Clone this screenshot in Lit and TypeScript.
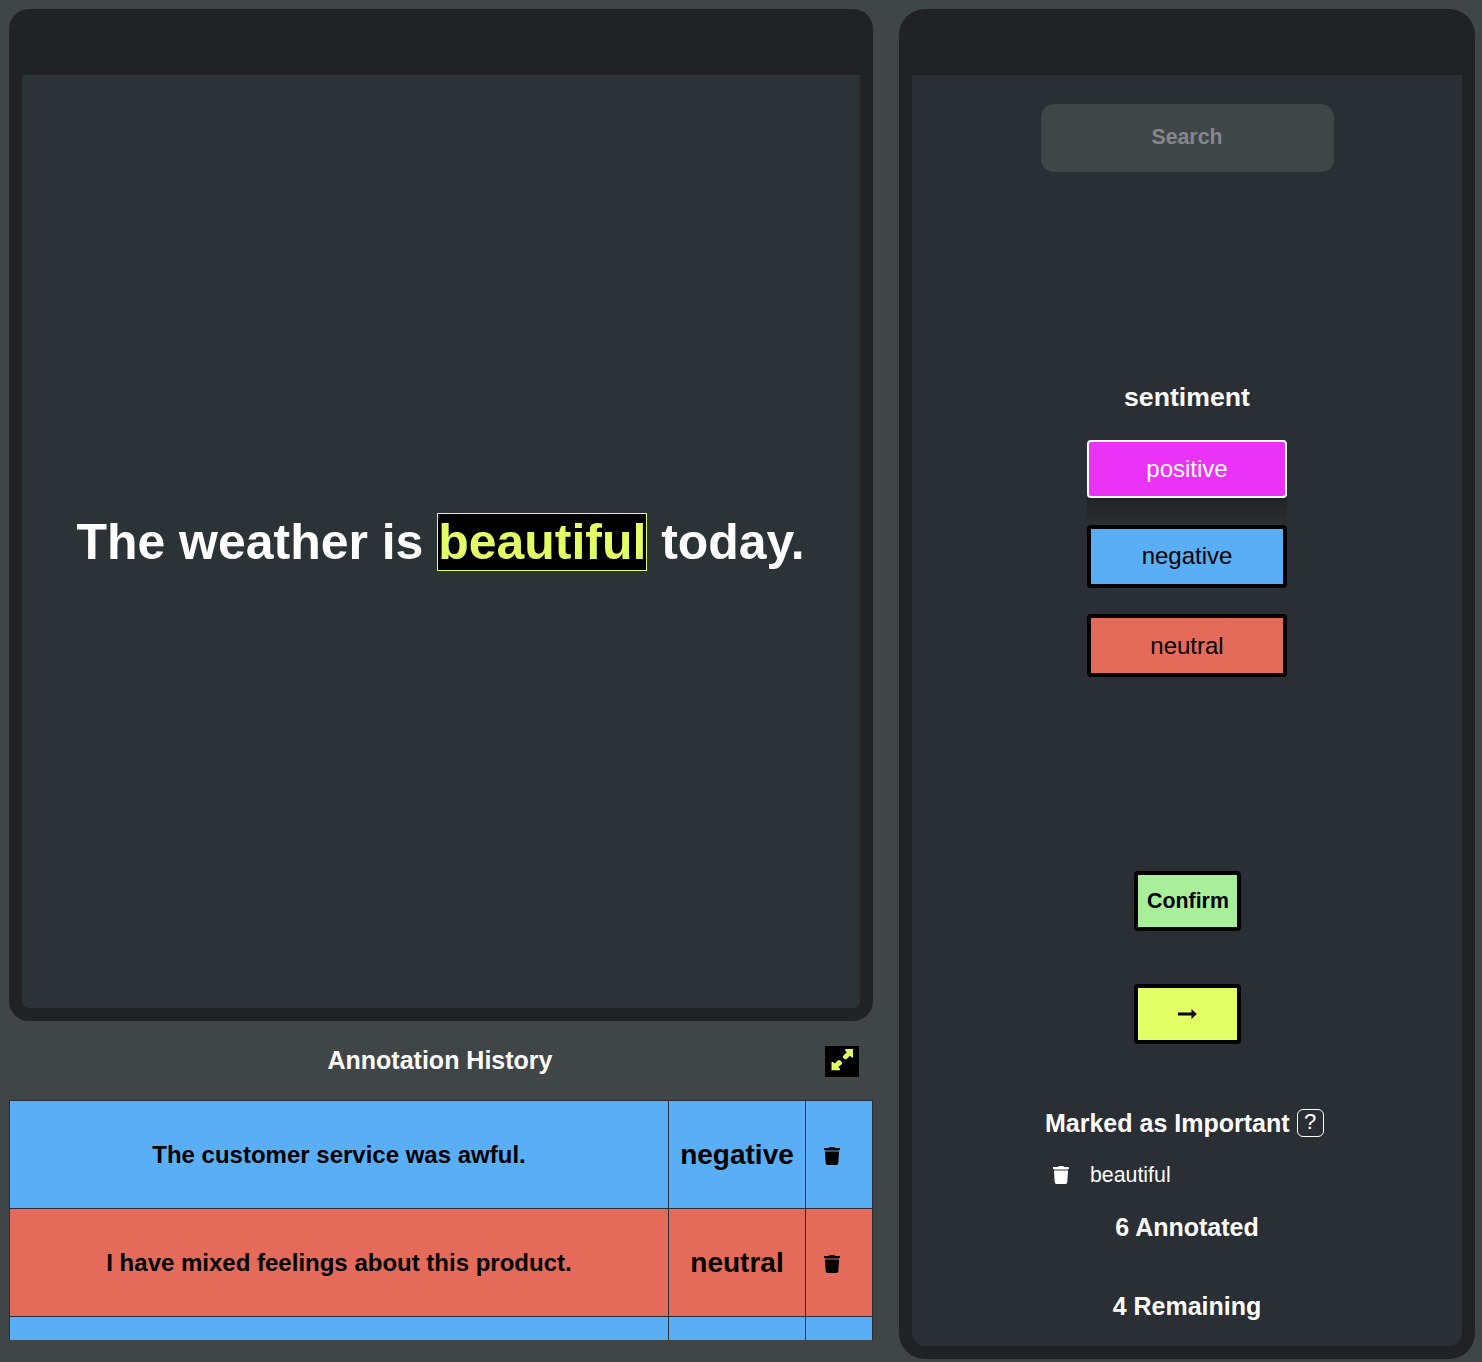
import { LitElement, html, css, svg } from "lit";
import { customElement, property } from "lit/decorators.js";

@customElement("trash-icon")
class TrashIcon extends LitElement {
  static styles = css`
    :host { display: block; width: 16px; height: 18px; }
    .icon { display: block; fill: currentColor; }
    .rim { opacity: 0.5; }
  `;
  render() {
    return html`<svg class="icon" width="16" height="18" viewBox="0 0 16 18">
      <path d="M0 1H4.500Q5.500 0 6.500 0H9.500Q10.500 0 11.500 1H16V3H0Z" />
      <path class="rim" d="M1 3H15V5H1Z" />
      <path d="M1 5H15L14.300 16Q14.200 18 12.500 18H3.500Q1.800 18 1.700 16Z" />
    </svg>`;
  }
}

interface HistoryRow { text: string; label: string; kind: string; }

@customElement("annotation-history")
class AnnotationHistory extends LitElement {
  @property({ attribute: false }) rows: HistoryRow[] = [];
  static styles = css`
    :host { display: block; }
    .head { display: grid; grid-template-columns: 1fr auto 1fr; align-items: center; height: 31px; margin-top: 25px; padding-right: 14px; padding-left: 12px; }
    .title { grid-column: 2; margin: 0; padding-bottom: 2px; font-size: 25px; line-height: 29px; font-weight: 700; color: #fff; }
    .expand { grid-column: 3; justify-self: end; width: 34px; height: 31px; background: #000; display: flex; }
    .arrows { fill: #e4ff66; }
    .table { margin-top: 23px; height: 240px; overflow: hidden; }
    .row { display: grid; grid-template-columns: 659px 137px 67px; height: 107px; border-bottom: 1px solid #2a2e36; border-left: 1px solid #2a2e36; }
    .row:first-child { border-top: 1px solid #2a2e36; }
    .cell { display: flex; align-items: center; justify-content: center; box-sizing: border-box; border-right: 1px solid #2a2e36; font-weight: 700; }
    .text { font-size: 24px; }
    .label { font-size: 28px; }
    .remove { justify-content: flex-start; padding: 2px 0 0 18px; }
    .negative { background: #59aef6; }
    .neutral { background: #e46a5a; }
  `;
  render() {
    return html`
      <div class="head">
        <h2 class="title">Annotation History</h2>
        <div class="expand">
          <svg class="arrows" width="34" height="31" viewBox="0 0 34 31">
            ${svg`<path d="M20.500 3H28V11.500H26.700L25 9.800L21.300 13.300H19.800L18 11.800V10L21.800 6.300L20 4.500Z" />
            <path d="M6.500 16H8L9.800 17.500L13 14.200H15L17 16.300V18L13.300 21L15 22.800V24.300H6.500Z" />`}
          </svg>
        </div>
      </div>
      <div class="table">
        ${this.rows.map((r) => html`<div class="row ${r.kind}">
          <div class="cell text">${r.text}</div>
          <div class="cell label">${r.label}</div>
          <div class="cell remove"><trash-icon></trash-icon></div>
        </div>`)}
      </div>`;
  }
}

@customElement("app-root")
class AppRoot extends LitElement {
  static styles = css`
    :host { display: block; width: 1482px; height: 1362px; overflow: hidden; background: #404548; color: #000; font-family: "Liberation Sans", Arial, sans-serif; }
    .page { display: flex; gap: 26px; box-sizing: border-box; height: 1362px; padding: 9px 7px 3px 9px; }
    .main { width: 864px; }
    .frame { box-sizing: border-box; background: #212226; padding: 66px 13px 13px; }
    .doc { height: 1012px; border-radius: 20px; }
    .canvas { height: 933px; display: flex; align-items: center; justify-content: center; background: #2c3336; border-radius: 0 0 7px 7px; }
    .sentence { margin: 0; font-size: 49.950px; line-height: 58px; font-weight: 700; color: #fff; white-space: nowrap; padding-right: 1px; }
    .marked { color: #e4ff66; background: #000; border: 1px solid #e4ff66; }
    .side { width: 576px; height: 1350px; border-radius: 26px; }
    .panel { height: 1271px; box-sizing: border-box; padding-top: 29px; display: flex; flex-direction: column; align-items: center; background: #2a2e35; border-radius: 0 0 13px 13px; color: #fff; }
    .search { box-sizing: border-box; width: 293px; height: 68px; padding: 0 0 1px; border: 0; border-radius: 13px; background: #404548; text-align: center; font: 700 21.33px "Liberation Sans", Arial, sans-serif; color: #fff; }
    .search::placeholder { color: #84888b; opacity: 1; }
    .group { margin: 210px 0 0; font-size: 26.67px; line-height: 30px; font-weight: 700; }
    .choices { display: flex; flex-direction: column; width: 200px; margin-top: 28px; }
    .choice { box-sizing: border-box; display: flex; align-items: center; justify-content: center; border: 4px solid #000; border-radius: 4px; height: 63px; font-size: 24px; color: #000; }
    .positive { height: 58px; border: 2px solid #fff; background: #ea33f7; color: #fff; }
    .shade { height: 27px; background: linear-gradient(#1f2326, #25292c 45%, #2a2e31); }
    .negative { background: #59aef6; padding-bottom: 2px; }
    .neutral { margin-top: 26px; background: #e46a5a; }
    .action { box-sizing: border-box; display: flex; align-items: center; justify-content: center; width: 107px; height: 60px; border: 4px solid #000; border-radius: 4px; color: #000; font-size: 21.33px; font-weight: 700; }
    .confirm { margin-top: 194px; padding-left: 2px; background: #a8ee9b; }
    .next { margin-top: 53px; background: #e4ff66; }
    .important { display: flex; align-items: center; gap: 7px; margin-top: 64px; height: 30px; width: 284px; }
    .stat { margin: 0; font-size: 25px; line-height: 29px; font-weight: 700; white-space: nowrap; }
    .help { box-sizing: border-box; width: 27px; height: 28px; border: 1px solid #fff; border-radius: 6px; text-align: center; font-size: 22px; line-height: 24px; }
    .word { display: flex; align-items: center; width: 268px; margin-top: 24px; gap: 21px; height: 25px; font-size: 21.33px; }
    .word-text { padding-top: 2px; }
    .done { margin-top: 26px; }
    .left { margin-top: 50px; }
  `;
  rows: HistoryRow[] = [
    { text: "The customer service was awful.", label: "negative", kind: "negative" },
    { text: "I have mixed feelings about this product.", label: "neutral", kind: "neutral" },
    { text: "", label: "", kind: "negative" },
  ];
  render() {
    return html`<div class="page">
      <main class="main">
        <section class="frame doc"><div class="canvas">
          <p class="sentence">The weather is <span class="marked">beautiful</span> today.</p>
        </div></section>
        <annotation-history .rows=${this.rows}></annotation-history>
      </main>
      <aside class="frame side"><div class="panel">
        <input class="search" placeholder="Search" />
        <h2 class="group">sentiment</h2>
        <div class="choices">
          <div class="choice positive">positive</div>
          <div class="shade"></div>
          <div class="choice negative">negative</div>
          <div class="choice neutral">neutral</div>
        </div>
        <div class="action confirm">Confirm</div>
        <div class="action next">
          <svg width="20" height="12" viewBox="0 0 20 12"><path d="M1 4.500H14.500V1L19.800 6L14.500 11V7.500H1Z" /></svg>
        </div>
        <div class="important"><h3 class="stat">Marked as Important</h3><span class="help">?</span></div>
        <div class="word"><trash-icon></trash-icon><span class="word-text">beautiful</span></div>
        <h3 class="stat done">6 Annotated</h3>
        <h3 class="stat left">4 Remaining</h3>
      </div></aside>
    </div>`;
  }
}
